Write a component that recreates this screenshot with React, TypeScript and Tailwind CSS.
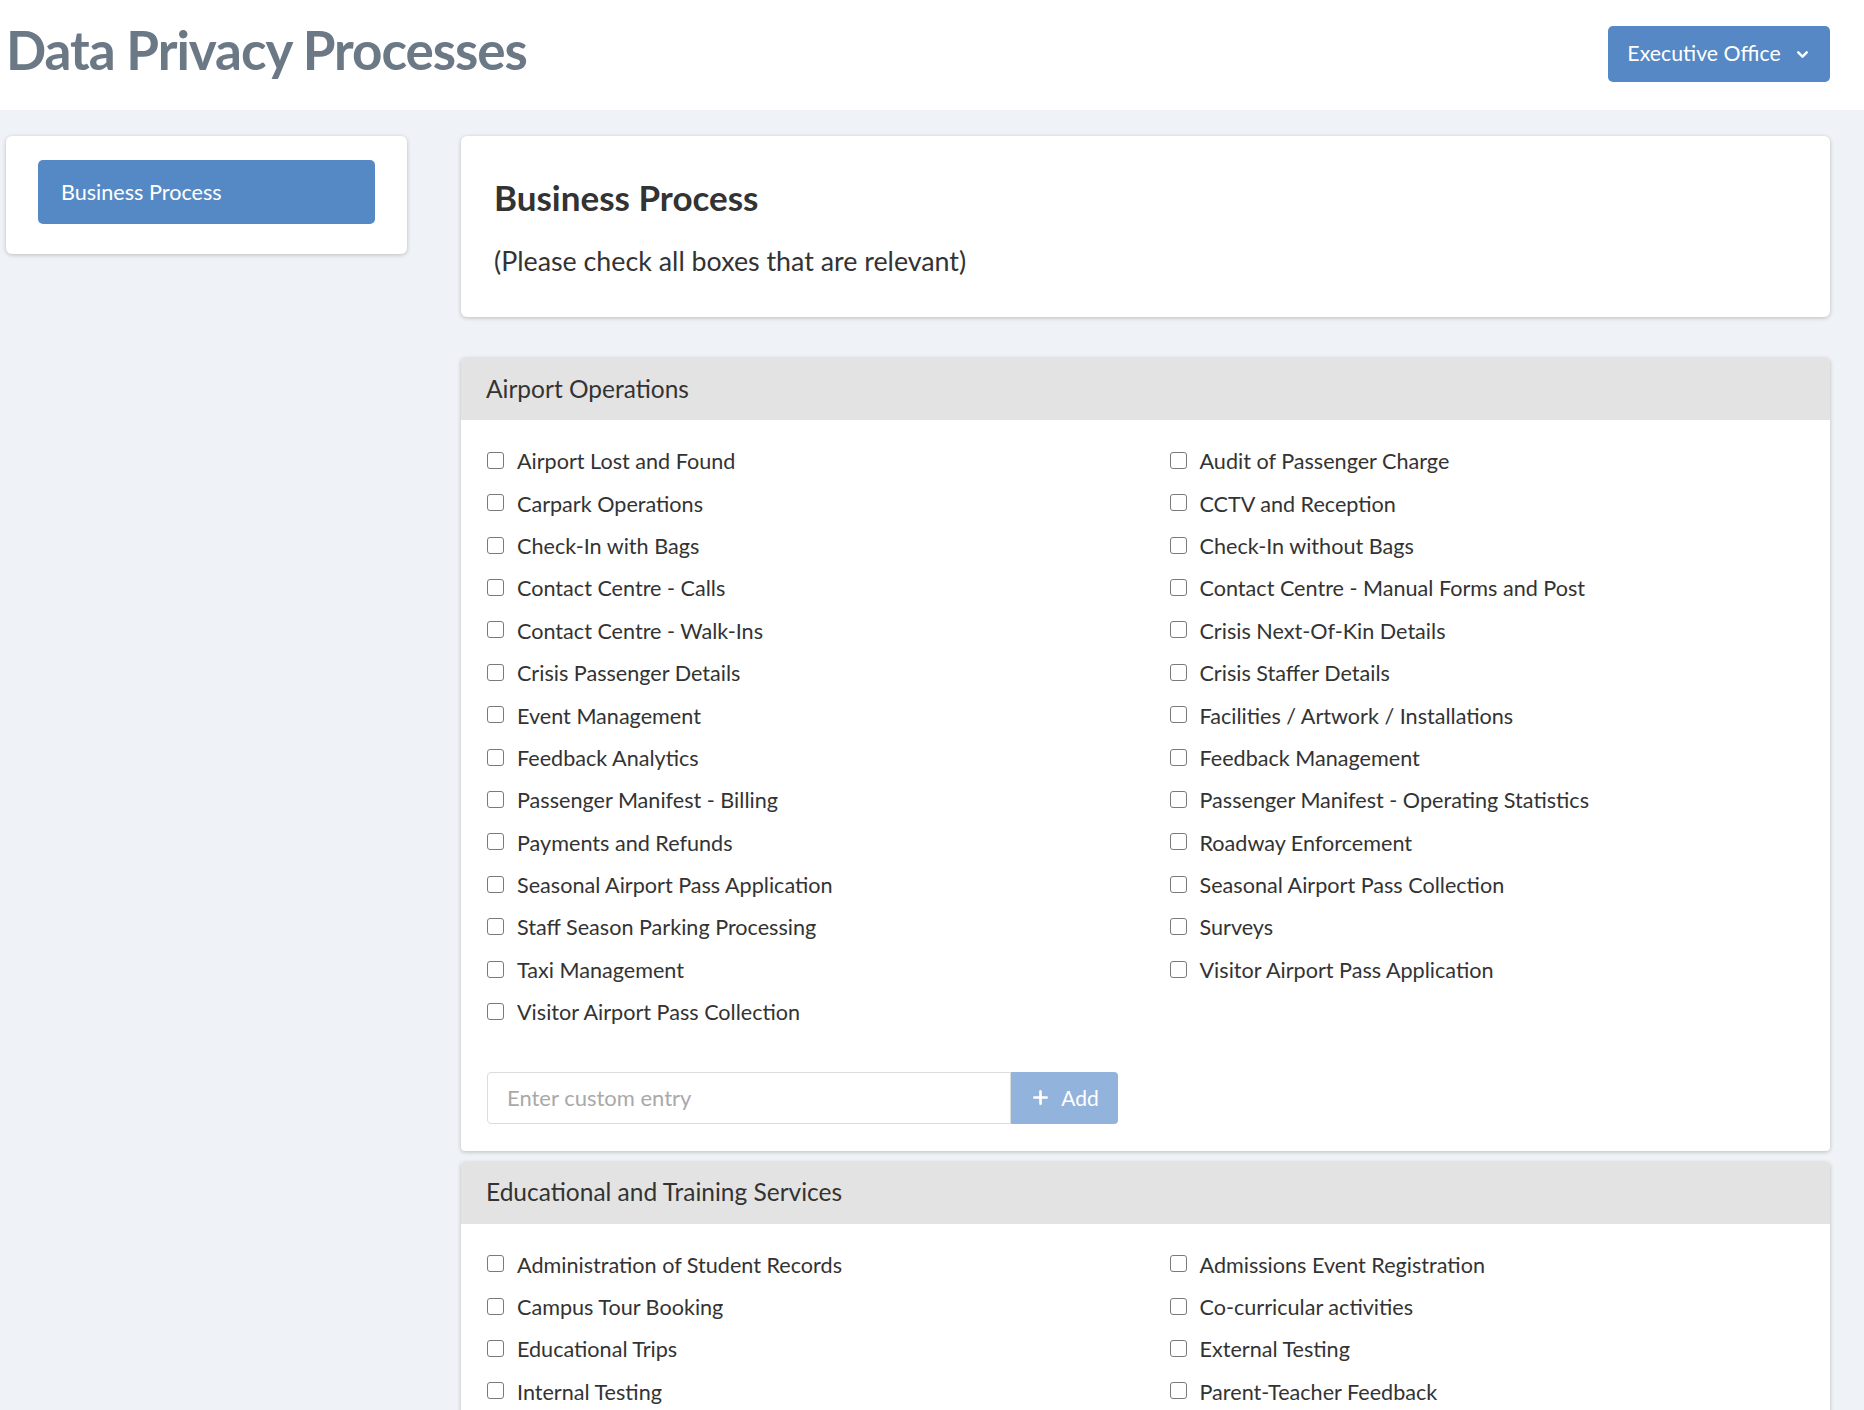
import { ChevronDown, Plus } from 'lucide-react'

const airportOps = [
  'Airport Lost and Found',
  'Audit of Passenger Charge',
  'Carpark Operations',
  'CCTV and Reception',
  'Check-In with Bags',
  'Check-In without Bags',
  'Contact Centre - Calls',
  'Contact Centre - Manual Forms and Post',
  'Contact Centre - Walk-Ins',
  'Crisis Next-Of-Kin Details',
  'Crisis Passenger Details',
  'Crisis Staffer Details',
  'Event Management',
  'Facilities / Artwork / Installations',
  'Feedback Analytics',
  'Feedback Management',
  'Passenger Manifest - Billing',
  'Passenger Manifest - Operating Statistics',
  'Payments and Refunds',
  'Roadway Enforcement',
  'Seasonal Airport Pass Application',
  'Seasonal Airport Pass Collection',
  'Staff Season Parking Processing',
  'Surveys',
  'Taxi Management',
  'Visitor Airport Pass Application',
  'Visitor Airport Pass Collection',
]

const eduServices = [
  'Administration of Student Records',
  'Admissions Event Registration',
  'Campus Tour Booking',
  'Co-curricular activities',
  'Educational Trips',
  'External Testing',
  'Internal Testing',
  'Parent-Teacher Feedback',
]

function CheckItem({ label }: { label: string }) {
  return (
    <label className="flex h-[42.4px] items-center gap-[13px] text-[21.6px] text-[#333]">
      <input
        type="checkbox"
        className="h-[17px] w-[17px] shrink-0 -translate-y-[1px] appearance-none rounded-[3px] border border-[#7a7a7a] bg-white"
      />
      <span>{label}</span>
    </label>
  )
}

function CategoryPanel({ title, items }: { title: string; items: string[] }) {
  return (
    <section className="overflow-hidden rounded-[4px] bg-white shadow-[0_1px_4px_rgba(0,0,0,0.22)]">
      <div className="flex h-[62px] items-center bg-[#e3e3e3] px-[25px] text-[24.5px] text-[#333]">
        {title}
      </div>
      <div className="px-[26px] pt-[20px] pb-[27px]">
        <div className="grid grid-cols-2 gap-x-12">
          {items.map((item) => (
            <CheckItem key={item} label={item} />
          ))}
        </div>
        <div className="mt-[38px] flex h-[52px] w-[631px]">
          <input
            type="text"
            placeholder="Enter custom entry"
            className="h-full flex-1 rounded-l-[4px] border border-[#dcdcdc] px-[19px] text-[22px] text-[#333] outline-none placeholder:text-[#a9a9a9]"
          />
          <button
            type="button"
            className="flex h-full w-[107px] items-center justify-center gap-[10px] rounded-r-[4px] bg-[#92b4dc] text-[21px] text-white"
          >
            <Plus className="h-[21px] w-[21px]" strokeWidth={3} />
            Add
          </button>
        </div>
      </div>
    </section>
  )
}

export default function App() {
  return (
    <div className="min-h-screen bg-[#eff2f6] font-['Lato',sans-serif]">
      <header className="flex h-[110px] items-start justify-between bg-white pl-[6px] pr-[34px]">
        <h1 className="mt-[18px] text-[53px] leading-[1.2] font-bold tracking-[-0.02em] text-[#6b7885]">
          Data Privacy Processes
        </h1>
        <button
          type="button"
          className="mt-[26px] flex h-[56px] w-[222px] items-center justify-center gap-[13px] rounded-[5px] bg-[#5588c4] text-[21.3px] text-white"
        >
          Executive Office
          <ChevronDown className="h-[17px] w-[17px]" strokeWidth={3.5} />
        </button>
      </header>

      <main className="flex items-start gap-[54px] pt-[26px] pl-[6px] pr-[34px]">
        <aside className="w-[401px] shrink-0 rounded-[6px] bg-white px-[32px] pt-[24px] pb-[30px] shadow-[0_1px_4px_rgba(0,0,0,0.22)]">
          <button
            type="button"
            className="flex h-[64px] w-full items-center rounded-[5px] bg-[#5589c5] px-[23px] text-[21.6px] text-white"
          >
            Business Process
          </button>
        </aside>

        <div className="flex min-w-0 flex-1 flex-col">
          <div className="rounded-[6px] bg-white px-[33px] pt-[40px] pb-[40px] shadow-[0_1px_4px_rgba(0,0,0,0.22)]">
            <h2 className="text-[35px] leading-[1.2] font-bold text-[#333]">Business Process</h2>
            <p className="mt-[27px] text-[26.8px] leading-[1.2] text-[#333]">
              (Please check all boxes that are relevant)
            </p>
          </div>

          <div className="mt-[41px] flex flex-col gap-[11px]">
            <CategoryPanel title="Airport Operations" items={airportOps} />
            <CategoryPanel title="Educational and Training Services" items={eduServices} />
          </div>
        </div>
      </main>
    </div>
  )
}
